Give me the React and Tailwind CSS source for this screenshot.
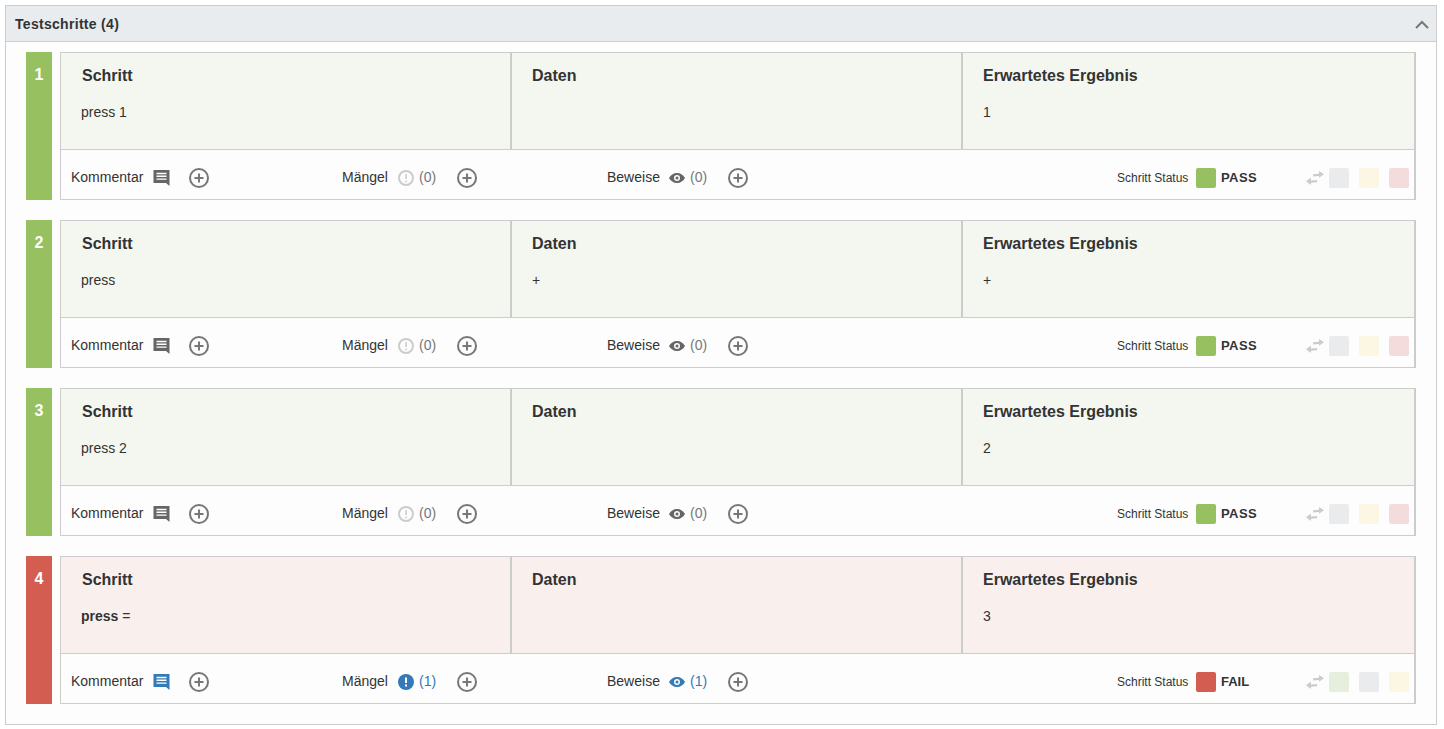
import React from 'react';

const steps = [
  { n: 1, step: 'press 1', data: '', result: '1', status: 'PASS' },
  { n: 2, step: 'press', data: '+', result: '+', status: 'PASS' },
  { n: 3, step: 'press 2', data: '', result: '2', status: 'PASS' },
  { n: 4, step: 'press', data: '', result: '3', status: 'FAIL', count: 1 },
];

function CommentIcon({ active }) {
  return (
    <svg width="17" height="16" viewBox="0 0 17 16" className={active ? 'text-[#337ab7]' : 'text-[#666666]'}>
      <path d="M0.500 0h16v16l-3.500-3H0.500z" fill="currentColor" />
      <path d="M3.500 3.500h10M3.500 6.300h10M3.500 9.100h10" stroke="#fff" strokeWidth="1.400" />
    </svg>
  );
}

function PlusIcon() {
  return (
    <svg width="20" height="20" viewBox="0 0 20 20" className="text-[#777777]">
      <circle cx="10" cy="10" r="9" fill="none" stroke="currentColor" strokeWidth="2" />
      <path d="M10 5.500v9M5.500 10h9" stroke="currentColor" strokeWidth="2" />
    </svg>
  );
}

function DefectIcon({ active }) {
  if (active) {
    return (
      <svg width="16" height="16" viewBox="0 0 16 16">
        <circle cx="8" cy="8" r="8" fill="#337ab7" />
        <path d="M8 3.500v5.500" stroke="#fff" strokeWidth="2" />
        <path d="M8 10.500v2" stroke="#fff" strokeWidth="2" />
      </svg>
    );
  }
  return (
    <svg width="16" height="16" viewBox="0 0 16 16">
      <circle cx="8" cy="8" r="7" fill="none" stroke="#cccccc" strokeWidth="2" />
      <path d="M8 4v5M8 10.500v1.800" stroke="#cccccc" strokeWidth="1.600" />
    </svg>
  );
}

function EyeIcon({ active }) {
  return (
    <svg width="16" height="12" viewBox="0 0 16 12" className={active ? 'text-[#337ab7]' : 'text-[#666666]'}>
      <path
        fillRule="evenodd"
        fill="currentColor"
        d="M8 1c3.500 0 6.500 2.100 8 5-1.500 2.900-4.500 5-8 5S1.500 8.900 0 6c1.500-2.900 4.500-5 8-5zm0 2a3 3 0 1 0 0 6 3 3 0 0 0 0-6zm0 1.500a1.500 1.500 0 1 1 0 3 1.500 1.500 0 0 1 0-3z"
      />
    </svg>
  );
}

function SwapIcon() {
  return (
    <svg width="18" height="14" viewBox="0 0 18 14" className="text-[#cccccc]">
      <path d="M13 0l5 3.300-5 3.400V5L7 5.600V3.300L13 2.700z" fill="currentColor" />
      <path d="M5 6.500L0 10.300 5 14v-2.200l6-.6V8.900l-6 .6z" fill="currentColor" />
    </svg>
  );
}

function Column({ title, children, first, last }) {
  return (
    <div className={`${last ? 'flex-1' : 'w-[451px] border-r-2 border-[#cccccc]'} ${first ? 'pl-[21px]' : 'pl-[20px]'}`}>
      <div className="mt-[13px] h-[20px] text-[16px] leading-[20px] font-bold text-[#333333]">{title}</div>
      <div className={`mt-[16px] h-[20px] text-[14px] leading-[20px] text-[#333333] ${first ? '-ml-px' : ''}`}>{children}</div>
    </div>
  );
}

function Step({ step }) {
  const fail = step.status === 'FAIL';
  const count = step.count || 0;
  const countColor = count ? 'text-[#337ab7]' : 'text-[#777777]';
  const others = fail
    ? ['bg-[#e6efdd]', 'bg-[#eaebed]', 'bg-[#fcf7e3]']
    : ['bg-[#eaebed]', 'bg-[#fcf7e3]', 'bg-[#f4dcdc]'];

  return (
    <div className="flex h-[148px] gap-[8px]">
      <div className={`w-[26px] pt-[13px] text-center text-[16px] leading-[20px] font-bold text-white ${fail ? 'bg-[#d45d52]' : 'bg-[#97c160]'}`}>
        {step.n}
      </div>
      <div className="flex w-[1356px] flex-col border border-r-2 border-[#cccccc] bg-[#fdfdfd]">
        <div className={`flex h-[97px] border-b border-[#cccccc] ${fail ? 'bg-[#f9f0ee]' : 'bg-[#f4f7f0]'}`}>
          <Column title="Schritt" first>
            {step.n === 4 ? <><b>press</b> =</> : step.step}
          </Column>
          <Column title="Daten">{step.data}</Column>
          <Column title="Erwartetes Ergebnis" last>{step.result}</Column>
        </div>
        <div className="flex flex-1 items-center pt-[7px] text-[14px] text-[#333333]">
          <div className="flex w-[281px] items-center pl-[10px]">
            <span className="mb-[2px] w-[82px]">Kommentar</span>
            <CommentIcon active={fail} />
            <span className="ml-[19px]"><PlusIcon /></span>
          </div>
          <div className="flex w-[265px] items-center">
            <span className="mb-[2px] w-[56px]">Mängel</span>
            <DefectIcon active={count > 0} />
            <span className={`mb-[2px] ml-[5px] w-[38px] ${countColor}`}>({count})</span>
            <PlusIcon />
          </div>
          <div className="flex w-[510px] items-center">
            <span className="mb-[2px] w-[62px]">Beweise</span>
            <EyeIcon active={count > 0} />
            <span className={`mb-[2px] ml-[5px] w-[38px] ${countColor}`}>({count})</span>
            <PlusIcon />
          </div>
          <div className="flex items-center">
            <span className="w-[79px] text-[12px]">Schritt Status</span>
            <span className={`h-[20px] w-[20px] rounded-[2px] ${fail ? 'bg-[#d45d52]' : 'bg-[#97c160]'}`} />
            <span className={`ml-[5px] w-[85px] text-[13px] font-bold ${fail ? '' : 'tracking-[0.4px]'}`}>{step.status}</span>
            <SwapIcon />
            <div className="ml-[5px] flex gap-[10px]">
              {others.map((c) => (
                <span key={c} className={`h-[20px] w-[20px] rounded-[2px] ${c}`} />
              ))}
            </div>
          </div>
        </div>
      </div>
    </div>
  );
}

export default function App() {
  return (
    <div className="h-[729px] bg-white p-[5px] font-['Liberation_Sans',Arial,sans-serif]">
      <div className="h-[720px] w-[1432px] border border-[#cccccc] bg-[#fdfdfd]">
        <div className="flex h-[36px] items-center justify-between border-b border-[#cccccc] bg-[#e8ecee] pt-[1px] pr-[7px] pl-[9px]">
          <span className="text-[14px] font-bold tracking-[0.3px] text-[#333333]">Testschritte (4)</span>
          <svg width="14" height="9" viewBox="0 0 14 9" className="mt-[1px] text-[#777777]">
            <path d="M1 8l6-6 6 6" fill="none" stroke="currentColor" strokeWidth="2" />
          </svg>
        </div>
        <div className="flex flex-col gap-[20px] pt-[10px] pl-[20px]">
          {steps.map((s) => (
            <Step key={s.n} step={s} />
          ))}
        </div>
      </div>
    </div>
  );
}
